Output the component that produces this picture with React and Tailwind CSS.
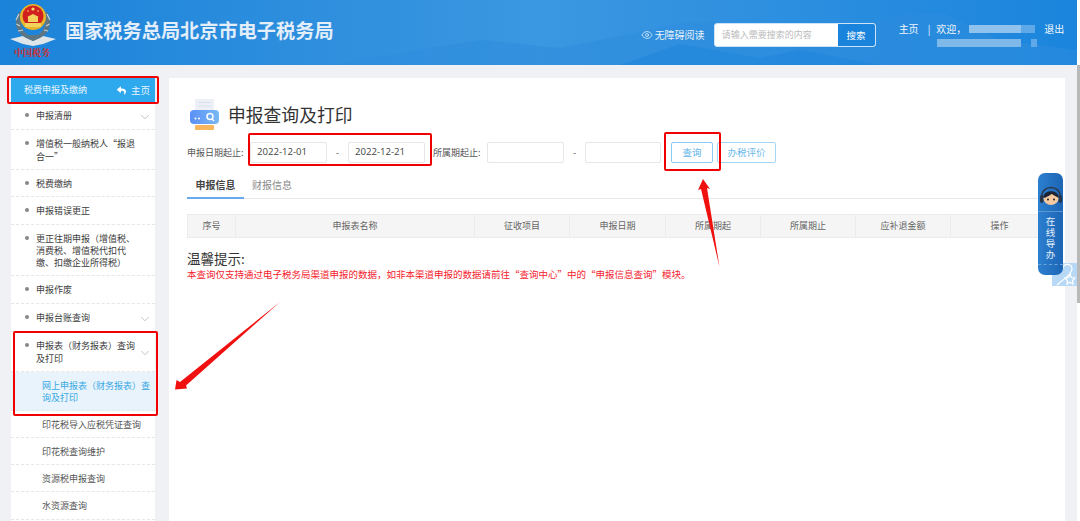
import React from "react";
import { ChevronDown, Eye } from "lucide-react";
import { FaReply } from "react-icons/fa";

const rows = [
  { t: "申报清册", h: "h-[28px]", chev: true },
  { t: "增值税一般纳税人“报退合一”", h: "h-[40px]" },
  { t: "税费缴纳", h: "h-[27px]" },
  { t: "申报错误更正", h: "h-[28px]" },
  { t: "更正往期申报（增值税、消费税、增值税代扣代缴、扣缴企业所得税）", h: "h-[51px]" },
  { t: "申报作废", h: "h-[28px]" },
  { t: "申报台账查询", h: "h-[28px]", chev: true },
  { t: "申报表（财务报表）查询及打印", h: "h-[40px]", chev: true },
];
const subs = [
  { t: "网上申报表（财务报表）查询及打印", h: "h-[39px]", active: true },
  { t: "印花税导入应税凭证查询", h: "h-[27px]" },
  { t: "印花税查询维护", h: "h-[27px]" },
  { t: "资源税申报查询", h: "h-[27px]" },
  { t: "水资源查询", h: "h-[28px]" },
];
const cols = [
  { t: "序号", w: "w-[48px]" },
  { t: "申报表名称", w: "w-[239px]" },
  { t: "征收项目", w: "w-[95px]" },
  { t: "申报日期", w: "w-[96px]" },
  { t: "所属期起", w: "w-[95px]" },
  { t: "所属期止", w: "w-[95px]" },
  { t: "应补退金额", w: "w-[95px]" },
  { t: "操作", w: "w-[97px]" },
];

function Emblem() {
  return (
    <div className="relative w-[46px] h-[62px] shrink-0 ml-[10px]">
      <svg viewBox="0 0 46 50" className="w-[46px] h-[50px] block">
        <path d="M0 39 L13 36 L23 41 L33 36 L46 39 L33 44 L23 46 L13 44 Z" fill="#dfe6ea" />
        <path d="M9 12 C3 22 6 33 16 38 L23 41 L30 38 C40 33 43 22 37 12 L33 14 C37 22 35 30 28 35 L18 35 C11 30 9 22 13 14 Z" fill="#5d7683" />
        <path d="M9 14 L6 20 M6.5 24 L10 26 M8 31 L13 30 M34 30 L38 31 M36 26 L39.5 24 M37 14 L40 20" stroke="#c5d3da" strokeWidth="1.2" />
        <circle cx="23" cy="17" r="13" fill="#e8b52a" />
        <circle cx="23" cy="16" r="10.5" fill="#d0201f" />
        <path d="M15 23 H31 V27 H15 Z" fill="#f3d35b" />
        <path d="M18 22 V17 H28 V22 Z M17 17 L23 14 L29 17 Z" fill="#f3d35b" />
        <circle cx="23" cy="9" r="1.6" fill="#f7dc66" />
        <circle cx="18" cy="11" r="0.8" fill="#f7dc66" />
        <circle cx="28" cy="11" r="0.8" fill="#f7dc66" />
      </svg>
      <div className="absolute left-[4px] top-[47px] text-[9px] leading-[11px] font-bold text-[#d8291f] whitespace-nowrap font-['Noto_Serif_CJK_SC','Noto_Sans_CJK_SC',serif]">中国税务</div>
    </div>
  );
}

function PrintIcon() {
  return (
    <svg viewBox="0 0 30 33" className="w-[30px] h-[33px] shrink-0">
      <defs>
        <linearGradient id="pb" x1="0" x2="1" y1="0" y2="0">
          <stop offset="0" stopColor="#5a8ff5" />
          <stop offset="1" stopColor="#79b9f4" />
        </linearGradient>
      </defs>
      <rect x="6" y="1" width="19" height="12" rx="1" fill="#edf1f7" />
      <path d="M9 4.5 H22 M9 8 H22" stroke="#d8dfea" strokeWidth="1" />
      <rect x="1" y="12" width="29" height="14" rx="4" fill="url(#pb)" />
      <circle cx="6.5" cy="20.5" r="1" fill="#fff" />
      <circle cx="10" cy="20.5" r="1" fill="#fff" />
      <circle cx="21" cy="18.5" r="3" fill="none" stroke="#fff" strokeWidth="1.5" />
      <path d="M23 21 L25 23" stroke="#fff" strokeWidth="1.5" />
      <rect x="6" y="27" width="19" height="5" rx="1" fill="#f8b75e" />
    </svg>
  );
}

function Avatar() {
  return (
    <svg viewBox="0 0 24 20" className="w-[24px] h-[20px]">
      <path d="M3 12 C1 -2 23 -2 21 12" fill="none" stroke="#2a3a4e" strokeWidth="1.5" />
      <rect x="1" y="9" width="3.5" height="8" rx="1.7" fill="#27364a" />
      <rect x="19.5" y="9" width="3.5" height="8" rx="1.7" fill="#27364a" />
      <ellipse cx="12" cy="12.5" rx="7.5" ry="6.5" fill="#f4c9a0" />
      <path d="M4.5 12 C3.5 3 20.5 3 19.5 12 C16 10 14 8.5 12.5 8 C10 10 7 11.5 4.5 12 Z" fill="#1c2433" />
      <circle cx="9" cy="13.5" r="1" fill="#222" />
      <circle cx="15" cy="13.5" r="1" fill="#222" />
    </svg>
  );
}

const Field = ({ v, w }) => (
  <div className={`h-[21px] ${w} border border-[#e6e6e6] rounded-[2px] flex items-center pl-[6px] text-[9.6px] text-[#444] font-['Open_Sans',sans-serif]`}>{v}</div>
);

export default function App() {
  return (
    <div className="flex h-[521px] w-[1080px] overflow-hidden bg-white font-['Noto_Sans_CJK_SC','Noto_Sans',sans-serif] relative">
      <div className="w-[1077px] shrink-0 flex flex-col bg-[#eff1f4]">
        <header className="h-[65px] shrink-0 relative flex items-start overflow-hidden bg-gradient-to-r from-[#1a83d9] via-[#3a97e1] to-[#1a85dd]">
          <svg viewBox="0 0 1077 65" className="absolute inset-0 w-full h-full" preserveAspectRatio="none">
            <path d="M330 65 L480 40 L560 48 L690 22 L760 24 L850 28 L905 14 L945 14 L1000 40 L1077 50 V65 Z" fill="#2e8ddc" fillOpacity="0.55" />
            <path d="M620 65 L680 44 L760 58 L800 50 L880 65 Z" fill="#1f86da" fillOpacity="0.6" />
          </svg>
          <div className="relative flex items-start w-full">
            <Emblem />
            <div className="ml-[9px] mt-[17px] text-[19.2px] leading-[26px] font-bold text-[#e2eefa] whitespace-nowrap">国家税务总局北京市电子税务局</div>
            <div className="ml-[307px] mt-[28px] flex items-center text-[10px] leading-[14px] text-[#e6f1fb] whitespace-nowrap">
              <Eye size={12} strokeWidth={1.5} className="mr-[2px]" />
              无障碍阅读
            </div>
            <div className="ml-[9px] mt-[23px] flex h-[24px] w-[162px] bg-white rounded-[3px] border border-[#cfe3f6] overflow-hidden">
              <div className="flex-1 flex items-center pl-[7px] text-[9px] text-[#bbbbbb]">请输入需要搜索的内容</div>
              <div className="w-[37px] bg-[#1a84dc] flex items-center justify-center text-[9.5px] text-white">搜索</div>
            </div>
            <div className="ml-[23px] mt-[21px] w-[166px] text-[10px] leading-[15px] text-[#f0f6fc] whitespace-nowrap">
              <div className="flex items-center">
                <span>主页</span>
                <span className="ml-[9px]">|</span>
                <span className="ml-[6px]">欢迎，</span>
                <div className="ml-[3px] h-[8px] w-[52px] bg-[#8fc3ee]" />
                <div className="h-[8px] w-[14px] bg-[#5fa9e8]" />
                <span className="ml-[9px]">退出</span>
              </div>
              <div className="flex mt-[3px] ml-[38px]">
                <div className="h-[8px] w-[84px] bg-[#7fb9ea]" />
                <div className="ml-[10px] h-[8px] w-[6px] bg-[#5fa9e8]" />
              </div>
            </div>
          </div>
        </header>

        <div className="flex flex-1 min-h-0 pt-[13px]">
          <aside className="ml-[11px] w-[144px] shrink-0 flex flex-col bg-white overflow-hidden">
            <div className="h-[24px] shrink-0 bg-[#2fa9ee] flex items-center justify-between pl-[13px] pr-[5px] text-[9px] text-[#e8f5fe]">
              <span>税费申报及缴纳</span>
              <span className="flex items-center text-[9.5px]">
                <FaReply size={9} className="mr-[5px] text-white" />
                主页
              </span>
            </div>
            {rows.map((r) => (
              <div key={r.t} className={`${r.h} shrink-0 relative flex items-center pt-[2px] pl-[25px] pr-[20px] border-b border-dashed border-[#e6e6e6] text-[9px] leading-[12.2px] text-[#3d3d3d]`}>
                <span className="absolute left-[14px] top-[11px] w-[4px] h-[4px] rounded-full bg-[#888]" />
                <span>{r.t}</span>
                {r.chev && <ChevronDown size={14} strokeWidth={1} className="absolute right-[3px] text-[#999]" />}
              </div>
            ))}
            {subs.map((s) => (
              <div key={s.t} className={`${s.h} shrink-0 flex items-center pt-[2px] pl-[31px] pr-[5px] border-b border-dashed border-[#e6e6e6] text-[9px] leading-[12.2px] ${s.active ? "bg-[#e9f3fb] text-[#38a9e4]" : "text-[#555]"}`}>
                {s.t}
              </div>
            ))}
          </aside>

          <main className="ml-[14px] w-[896px] shrink-0 bg-white pl-[18px] pr-[18px] flex flex-col">
            <div className="mt-[19px] flex items-center h-[34px] ml-[2px]">
              <PrintIcon />
              <h1 className="ml-[9px] text-[17.8px] leading-[24px] text-[#333] font-normal whitespace-nowrap">申报查询及打印</h1>
            </div>
            <div className="mt-[11px] flex items-center text-[9px] text-[#555] whitespace-nowrap">
              <span className="w-[63px]">申报日期起止:</span>
              <Field v="2022-12-01" w="w-[77px]" />
              <span className="w-[21px] text-center">-</span>
              <Field v="2022-12-21" w="w-[77px]" />
              <span className="ml-[8px] w-[54px]">所属期起止:</span>
              <Field w="w-[77px]" />
              <span className="w-[21px] text-center">-</span>
              <Field w="w-[76px]" />
              <button className="ml-[10px] w-[42px] h-[21px] border border-[#8ccbf2] rounded-[2px] text-[9.5px] text-[#5cb3ea]">查询</button>
              <button className="ml-[4px] w-[59px] h-[21px] border border-[#a6d6f5] rounded-[2px] text-[9.5px] text-[#6db9ec]">办税评价</button>
            </div>
            <div className="mt-[14px] flex h-[22px] border-b border-[#e8e8e8] w-[860px] text-[10px]">
              <div className="w-[57px] h-[22px] border-b-2 border-[#69a9ee] text-center font-bold text-[#444] leading-[15px]">申报信息</div>
              <div className="ml-[8px] text-[#888] leading-[15px]">财报信息</div>
            </div>
            <div className="mt-[15px] flex h-[24px] w-[860px] border border-[#ececec] bg-[#f5f5f5] text-[9px] text-[#666]">
              {cols.map((c, i) => (
                <div key={c.t} className={`${c.w} shrink-0 flex items-center justify-center ${i < cols.length - 1 ? "border-r border-[#ececec]" : ""}`}>{c.t}</div>
              ))}
            </div>
            <div className="mt-[11px] text-[13.5px] leading-[18px] text-[#333]">温馨提示:</div>
            <div className="mt-[1px] text-[9.5px] leading-[12px] text-[#f5222d] whitespace-nowrap">本查询仅支持通过电子税务局渠道申报的数据，如非本渠道申报的数据请前往“查询中心”中的“申报信息查询”模块。</div>
          </main>
        </div>
      </div>

      <div className="w-[3px] shrink-0 bg-white flex flex-col">
        <div className="h-[65px] shrink-0" />
        <div className="h-[238px] bg-[#b9b9b9]" />
      </div>

      {/* floating widgets */}
      <div className="absolute left-[1052px] top-[263px] w-[25px] h-[23px] bg-[#b7d9f5]">
        <svg viewBox="0 0 25 23" className="w-[25px] h-[23px] block">
          <path d="M5 22 C10 17 20 12 20 6 C20 0 11 0 11 5" fill="none" stroke="#fff" strokeWidth="1.2" />
          <path d="M18 11 L19.5 14.5 L23 15 L20.5 17.5 L21 21 L18 19.2 L15 21 L15.5 17.5 L13 15 L16.5 14.5 Z" fill="#b7d9f5" stroke="#fff" strokeWidth="1.2" />
        </svg>
      </div>
      <div className="absolute left-[1038px] top-[173px] w-[25px] h-[102px] rounded-[7px] bg-gradient-to-r from-[#2c7fd0] to-[#1d65b5] flex flex-col items-center pt-[13px]">
        <Avatar />
        <div className="mt-[5px] w-full border-t border-[#5c97d2]" />
        <div className="mt-[5px] h-[44px] text-[9.5px] leading-[12px] tracking-[1.5px] text-[#e8f2fb] [writing-mode:vertical-rl] whitespace-nowrap">在线导办</div>
        <div className="mt-[3px] w-full border-t border-dashed border-[#6ea4d8]" />
      </div>

      {/* red annotations */}
      <div className="absolute left-[7px] top-[76px] w-[152px] h-[28px] border-2 border-[#f00000] rounded-[2px]" />
      <div className="absolute left-[13px] top-[331px] w-[145px] h-[85px] border-2 border-[#f00000] rounded-[2px]" />
      <div className="absolute left-[248px] top-[133px] w-[184px] h-[33px] border-2 border-[#f00000] rounded-[2px]" />
      <div className="absolute left-[664px] top-[132px] w-[57px] h-[39px] border-2 border-[#f00000] rounded-[2px]" />
      <svg className="absolute left-0 top-0 w-[1080px] h-[521px] pointer-events-none" viewBox="0 0 1080 521">
        <polygon points="703,179 710,189 707,188 719.5,267 701,189 698,190" fill="#f01010" />
        <polygon points="175,389.5 176.5,380 180,382 280,302 186,385.5 187,388.5" fill="#f01010" />
      </svg>
    </div>
  );
}
